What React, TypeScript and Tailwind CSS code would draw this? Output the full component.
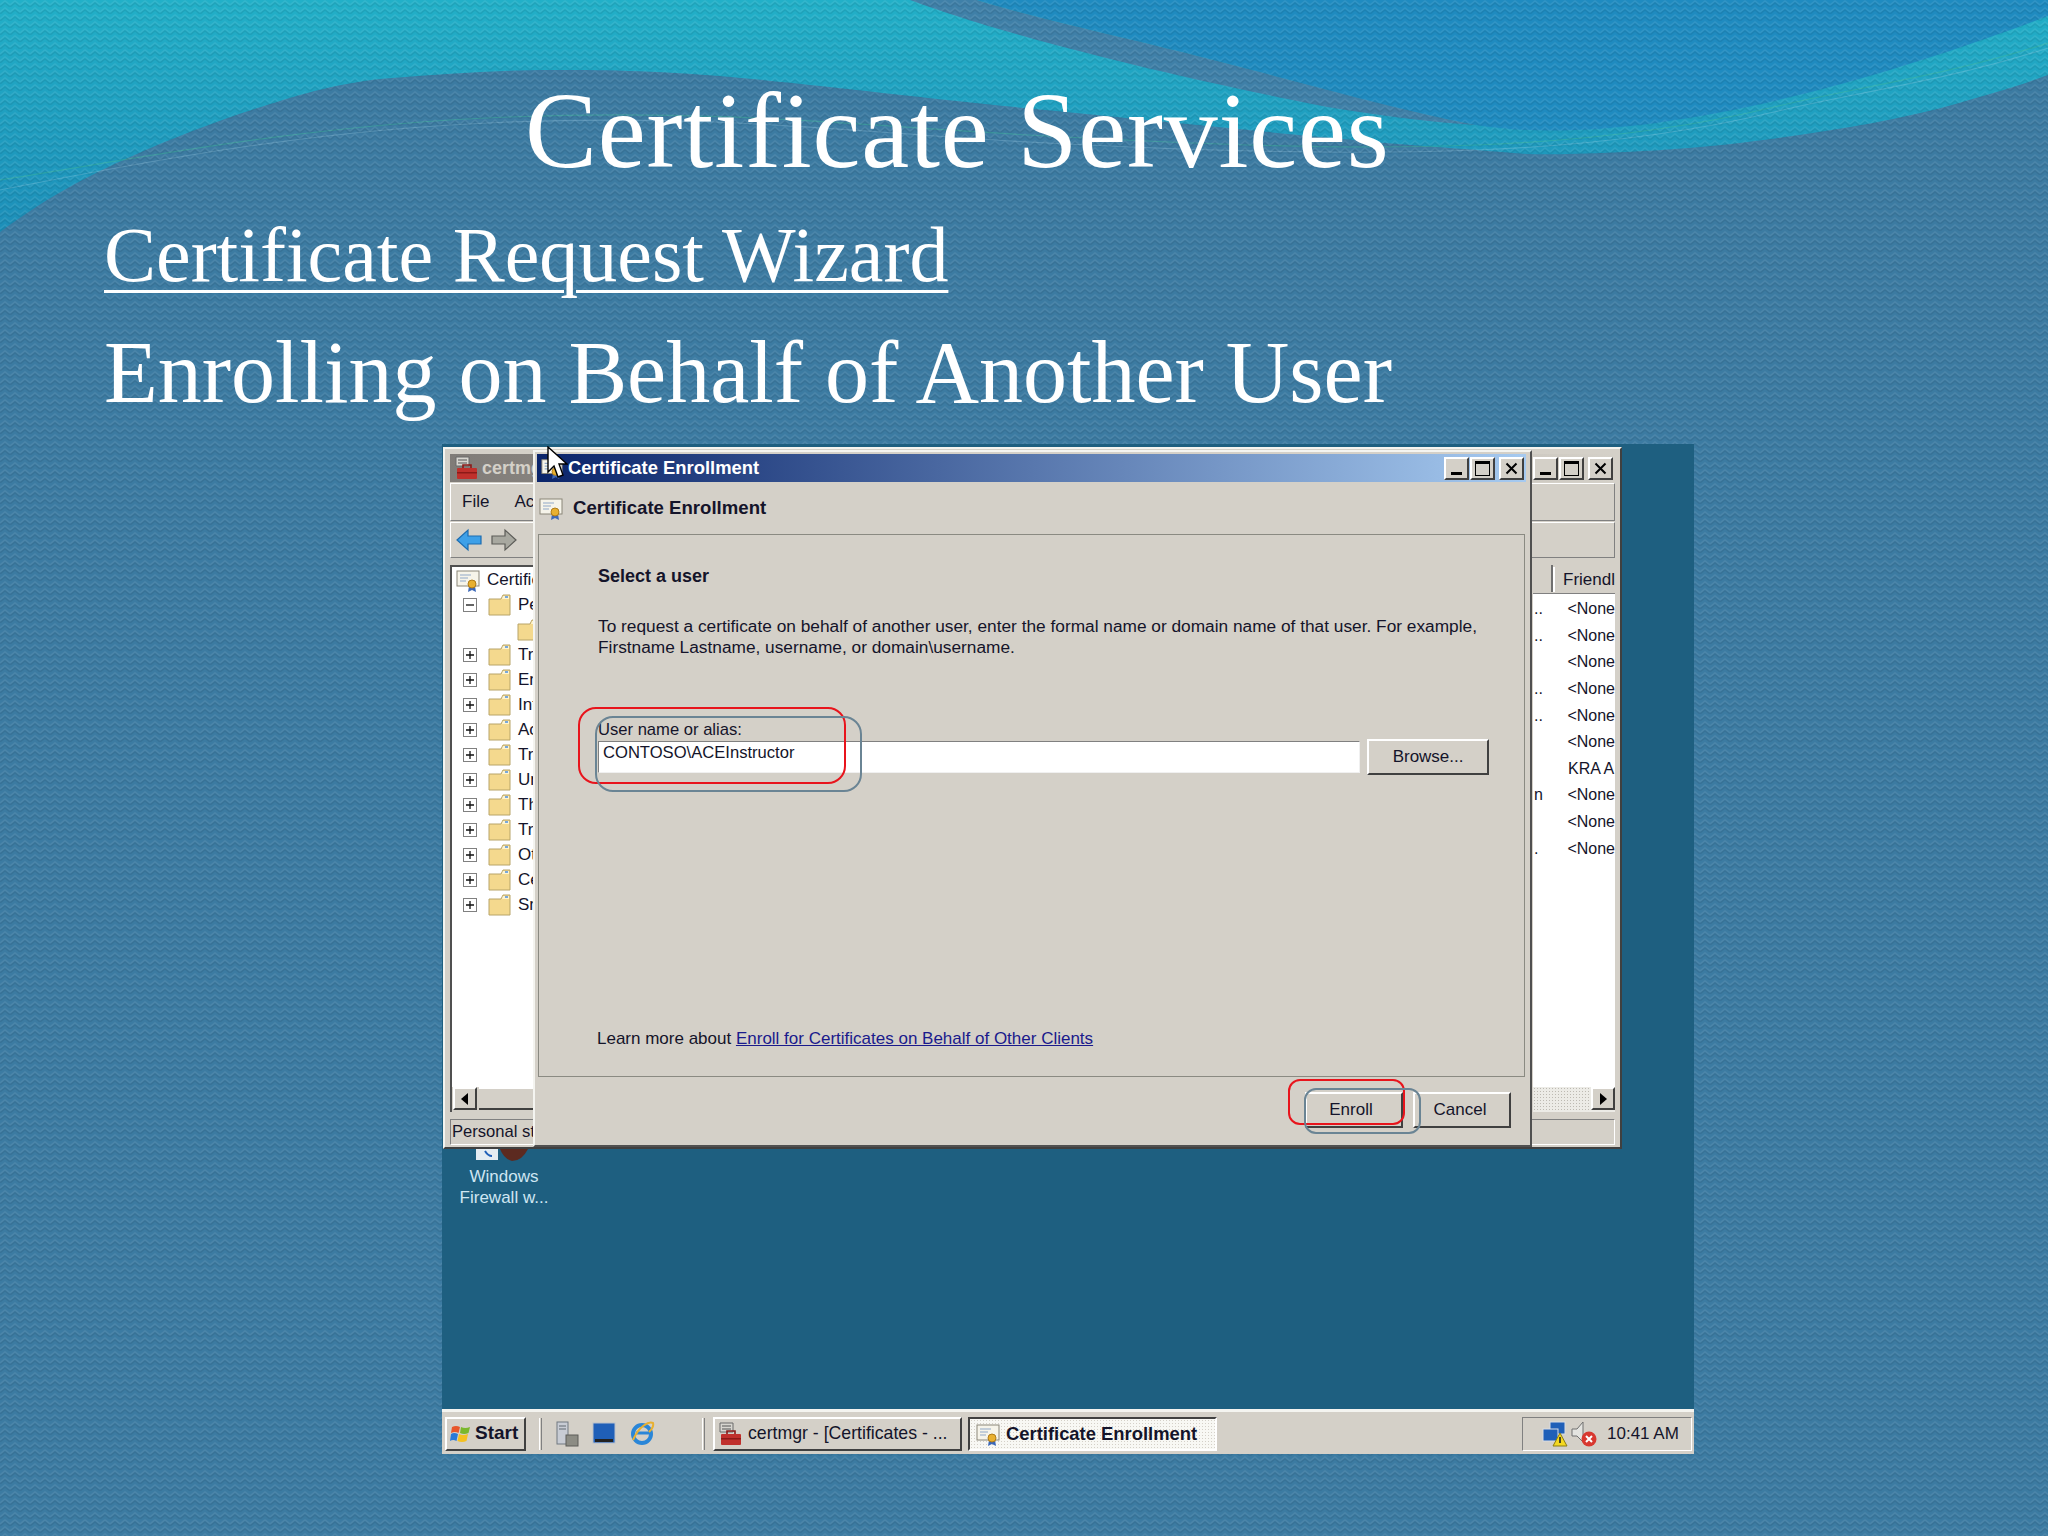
import React from "react";

const raised = "border-2 border-t-white border-l-white border-r-[#404040] border-b-[#404040] bg-[#d4d0c8]";
const ui = "font-['Liberation_Sans',Arial,sans-serif] text-[#14142a]";

const SlideBackground = () => (
  <svg className="absolute inset-0" width="2048" height="1536" viewBox="0 0 2048 1536">
    <defs>
      <linearGradient id="teal" x1="0" y1="0" x2="0" y2="1">
        <stop offset="0" stopColor="#22b0c8" />
        <stop offset="1" stopColor="#1c8db8" />
      </linearGradient>
      <pattern id="zig" width="10" height="7" patternUnits="userSpaceOnUse">
        <path d="M0 5L5 1L10 5" fill="none" stroke="#ffffff" strokeOpacity="0.08" strokeWidth="1.4" />
        <path d="M0 7L5 3L10 7" fill="none" stroke="#000000" strokeOpacity="0.07" strokeWidth="1.4" />
      </pattern>
    </defs>
    <rect width="2048" height="240" fill="url(#teal)" />
    <path d="M977 0C1040 20 1140 40 1252 70S1400 110 1476 125C1600 145 1800 110 2048 16L2048 0Z" fill="#1f8bc0" />
    <path d="M910 0C990 30 1140 70 1327 107Q1420 122 1476 125C1400 110 1330 90 1252 70C1140 40 1040 20 977 0Z" fill="#3f80a8" />
    <path d="M0 232C50 195 90 175 130 157S220 120 261 107S340 82 392 78S500 70 549 70S650 70 731 77S940 100 1045 110S1340 140 1437 147S1520 155 1567 154S1690 150 1763 140S1900 120 1959 103S2020 85 2048 75L2048 1536L0 1536Z" fill="#3c7ba2" />
    <path d="M0 180C130 160 300 125 509 117S850 125 1029 135S1350 150 1476 145S1700 125 1774 107S1950 75 2048 43" fill="none" stroke="#3fb89a" strokeOpacity="0.45" strokeWidth="1.2" />
    <path d="M0 190C130 165 300 130 509 122S850 132 1029 142S1350 155 1476 150S1700 130 1774 112S1950 80 2048 48" fill="none" stroke="#a6d4ea" strokeOpacity="0.28" strokeWidth="1.2" />
    <rect width="2048" height="1536" fill="url(#zig)" />
  </svg>
);

const Folder = () => (
  <svg width="23" height="22" viewBox="0 0 23 22" className="shrink-0">
    <path d="M1 5L1 21L22 21L22 1L15 1L13 5Z" fill="#f4d98e" stroke="#b8a468" />
    <path d="M15 2L21 2L21 5L14 5Z" fill="#fdf4d0" />
    <rect x="17" y="2" width="3" height="2" fill="#7aa8d8" />
  </svg>
);

const Expander = ({ minus }: { minus?: boolean }) => (
  <svg width="14" height="14" viewBox="0 0 14 14" className="shrink-0">
    <rect x="0.5" y="0.5" width="13" height="13" fill="#fff" stroke="#808080" />
    <path d={minus ? "M3 7H11" : "M3 7H11M7 3V11"} stroke="#111" strokeWidth="1.3" />
  </svg>
);

const CertIcon = ({ size = 24 }: { size?: number }) => (
  <svg width={size} height={size} viewBox="0 0 24 24" className="shrink-0">
    <rect x="1" y="3" width="22" height="15" fill="#f6f4ea" stroke="#8a8678" />
    <path d="M4 7H15M4 10H12M4 13H10" stroke="#8fa8c8" strokeWidth="1.2" />
    <path d="M13 18L12 24L16 22L20 24L19 18Z" fill="#3c68b8" />
    <circle cx="16" cy="16" r="4" fill="#e8b030" stroke="#b07c18" />
  </svg>
);

const Toolbox = ({ size = 24 }: { size?: number }) => (
  <svg width={size} height={size} viewBox="0 0 24 24" className="shrink-0">
    <path d="M2 1H15V10H2Z" fill="#d8d6d0" stroke="#6a6a6a" />
    <path d="M4 4H13M4 7H13" stroke="#555" />
    <rect x="3" y="12" width="20" height="11" rx="1" fill="#c0302c" />
    <path d="M9 12V9H17V12" fill="none" stroke="#8c1a18" strokeWidth="1.6" />
    <rect x="3" y="16" width="20" height="1.5" fill="#8c1a18" />
  </svg>
);

const WinButtons = () => (
  <div className="flex items-center">
    <button className={`${raised} flex h-[23px] w-[25px] items-end justify-center pb-[3px]`}>
      <span className="h-[3px] w-[11px] bg-black" />
    </button>
    <button className={`${raised} ml-[1px] flex h-[23px] w-[25px] items-center justify-center`}>
      <span className="h-[15px] w-[15px] border border-t-[3px] border-black" />
    </button>
    <button className={`${raised} ml-[4px] flex h-[23px] w-[25px] items-center justify-center`}>
      <svg width="13" height="13" viewBox="0 0 13 13">
        <path d="M1.5 1.5L11.5 11.5M11.5 1.5L1.5 11.5" stroke="#000" strokeWidth="2" />
      </svg>
    </button>
  </div>
);

const TreeRow = ({ label, minus, child }: { label: string; minus?: boolean; child?: boolean }) => (
  <div className={`flex h-[25px] items-center ${child ? "pl-[65px]" : "pl-[11px]"}`}>
    {!child && <Expander minus={minus} />}
    {!child && <span className="w-[11px]" />}
    <Folder />
    <span className="ml-[7px] text-[17px]">{label}</span>
  </div>
);

const ResultRow = ({ lead, name }: { lead: string; name: string }) => (
  <div className="flex h-[26.6px] items-center text-[16px]">
    <span className="w-[35px] pl-[1px]">{lead}</span>
    <span className="whitespace-nowrap">{name}</span>
  </div>
);

const ArrowButton = ({ dir }: { dir: "left" | "right" }) => (
  <button className={`${raised} flex h-[23px] w-[24px] shrink-0 items-center justify-center`}>
    <svg width="8" height="12" viewBox="0 0 8 12">
      <path d={dir === "left" ? "M7 0V12L0 6Z" : "M1 0V12L8 6Z"} fill="#000" />
    </svg>
  </button>
);

const CertmgrWindow = () => (
  <div className={`${ui} absolute left-[1px] top-[3px] flex h-[702px] w-[1179px] flex-col border-2 border-t-[#f4f4f0] border-l-[#f4f4f0] border-r-[#404040] border-b-[#404040] bg-[#d4d0c8] px-[5px] pt-[5px]`}>
    <div className="flex h-[28px] items-center justify-between bg-[linear-gradient(to_right,#807c78,#d4d0c8)] pl-[4px] pr-[2px]">
      <div className="flex items-center gap-[4px]">
        <Toolbox />
        <span className="text-[18px] font-bold text-[#d4d0c8]">certmgr</span>
      </div>
      <WinButtons />
    </div>
    <div className="mt-[1px] flex h-[38px] items-center gap-[25px] border border-b-[#808080] border-l-white border-r-[#808080] border-t-white pl-[11px] text-[17px]">
      <span>File</span>
      <span>Ac</span>
    </div>
    <div className="mt-[1px] flex h-[36px] items-center gap-[9px] border border-b-[#808080] border-l-white border-r-[#808080] border-t-white pl-[5px]">
      <svg width="26" height="24" viewBox="0 0 26 24">
        <path d="M1 12L12 2V8H25V16H12V22Z" fill="#3ea0e8" stroke="#1c6cb0" strokeWidth="1.2" />
      </svg>
      <svg width="26" height="24" viewBox="0 0 26 24">
        <path d="M25 12L14 2V8H1V16H14V22Z" fill="#a8a8a0" stroke="#5c5c58" strokeWidth="1.2" />
      </svg>
    </div>
    <div className="mt-[7px] flex h-[547px] justify-between">
      <div className="flex w-[300px] flex-col justify-between border-l-2 border-t-2 border-[#505050] bg-white">
        <div>
          <div className="flex h-[25px] items-center pl-[4px]">
            <CertIcon />
            <span className="ml-[7px] text-[17px]">Certificates</span>
          </div>
          <TreeRow label="Personal" minus />
          <TreeRow label="" child />
          {["Trusted", "Enterprise", "Intermediate", "Active", "Trusted", "Untrusted", "Third", "Trusted", "Other", "Certificate", "Smart"].map((label, i) => (
            <TreeRow key={i} label={label} />
          ))}
        </div>
        <div className="flex h-[25px] bg-[#d4d0c8] pl-[1px]">
          <ArrowButton dir="left" />
          <div className="ml-[2px] h-[23px] flex-1 border-b-2 border-t-2 border-b-[#404040] border-t-white" />
        </div>
      </div>
      <div className="flex w-[82px] flex-col justify-between bg-white">
        <div>
          <div className="flex h-[29px] items-end border-b border-[#808080] bg-[#d4d0c8] pb-[1px]">
            <span className="h-full w-[23px] border-r-2 border-[#707070]" />
            <span className="whitespace-nowrap border-l-2 border-white pl-[8px] text-[17px]">Friendl</span>
          </div>
          <div className="pt-[2px]">
            <ResultRow lead=".." name="<None" />
            <ResultRow lead=".." name="<None" />
            <ResultRow lead="" name="<None" />
            <ResultRow lead=".." name="<None" />
            <ResultRow lead=".." name="<None" />
            <ResultRow lead="" name="<None" />
            <ResultRow lead="" name="KRA A" />
            <ResultRow lead="n" name="<None" />
            <ResultRow lead="" name="<None" />
            <ResultRow lead="." name="<None" />
          </div>
        </div>
        <div className="flex h-[25px] justify-end bg-[radial-gradient(#bdbab2_1px,#ecebe6_1px)] bg-[length:3px_3px]">
          <ArrowButton dir="right" />
        </div>
      </div>
    </div>
    <div className="mt-[7px] flex h-[26px] items-center whitespace-nowrap border border-b-white border-l-[#808080] border-r-white border-t-[#808080] pl-[1px] text-[16.6px]">
      Personal store
    </div>
  </div>
);

const DialogButton = ({ label, className }: { label: string; className?: string }) => (
  <button className={`${raised} flex h-[36px] items-center justify-center text-[17px] ${className ?? ""}`}>{label}</button>
);

const EnrollmentDialog = () => (
  <div className={`${ui} absolute left-[91px] top-[6px] flex h-[697px] w-[999px] flex-col border-[2px] border-l-[#f4f4f0] border-t-[#f4f4f0] border-r-[#505050] border-b-[#505050] bg-[#d4d0c8] pl-[2px] pr-[4px] pt-[2px]`}>
    <div className="flex h-[28px] shrink-0 items-center justify-between bg-[linear-gradient(to_right,#0a246a,#a6caf0)] pl-[4px] pr-[2px]">
      <div className="flex items-center gap-[5px]">
        <CertIcon size={22} />
        <span className="text-[18.4px] font-bold text-white">Certificate Enrollment</span>
      </div>
      <WinButtons />
    </div>
    <div className="flex h-[52px] shrink-0 items-center pl-[2px]">
      <CertIcon />
      <span className="ml-[10px] text-[18.6px] font-bold">Certificate Enrollment</span>
    </div>
    <div className="mx-[1px] flex h-[543px] shrink-0 flex-col border border-[#8a8a82] pl-[59px] pr-[35px] pt-[29px]">
      <div className="text-[18px] font-bold leading-[24px]">Select a user</div>
      <p className="mt-[28px] w-[930px] text-[17.3px] leading-[21px]">
        To request a certificate on behalf of another user, enter the formal name or domain name of that user. For example,
        <br />
        Firstname Lastname, username, or domain\username.
      </p>
      <label className="mt-[61px] block text-[16.6px] leading-[22px]">User name or alias:</label>
      <div className="flex items-start">
        <div className="h-[32px] w-[763px] border border-b-[#f0f0f0] border-l-[#808080] border-r-[#f0f0f0] border-t-[#808080] bg-white pl-[4px] text-[16.6px] leading-[22px]">
          CONTOSO\ACEInstructor
        </div>
        <DialogButton label="Browse..." className="ml-[7px] -mt-[2px] w-[122px]" />
      </div>
      <div className="mt-[253px] -ml-[1px] text-[17px] leading-[22px]">
        Learn more about{" "}
        <a className="text-[#1a1a8c] underline">Enroll for Certificates on Behalf of Other Clients</a>
      </div>
    </div>
    <div className="flex flex-1 items-start justify-end gap-[10px] pr-[15px] pt-[15px]">
      <DialogButton label="Enroll" className="w-[98px] pr-[6px]" />
      <DialogButton label="Cancel" className="w-[98px] pr-[4px]" />
    </div>
  </div>
);

const Taskbar = () => (
  <div className={`${ui} flex h-[45px] shrink-0 items-center border-t-[3px] border-[#f4f4f0] bg-[#d4d0c8] pl-[3px] pr-[2px] pt-[1px]`}>
    <button className={`${raised} flex h-[34px] w-[81px] items-center gap-[2px] pl-[2px] text-[19px] font-bold`}>
      <svg width="24" height="24" viewBox="0 0 24 24" className="shrink-0">
        <path d="M3 5Q7 3 11 5L9.5 11Q6 9 2 11Z" fill="#e8562a" />
        <path d="M12 5Q16 7 21 5L19.5 11Q15 13 11 11Z" fill="#7ab82c" />
        <path d="M2 12Q5 10 9 12L7.5 19Q4 17 1 19Z" fill="#2a7ad8" />
        <path d="M10 12Q14 14 19 12L17.5 19Q13 21 8.5 19Z" fill="#f4c020" />
      </svg>
      Start
    </button>
    <span className="ml-[13px] h-[32px] w-[3px] border-l border-r border-l-white border-r-[#808080]" />
    <div className="ml-[13px] flex w-[147px] items-center gap-[13px]">
      <svg width="24" height="28" viewBox="0 0 24 28">
        <rect x="2" y="2" width="11" height="22" fill="#c8ccd4" stroke="#707880" />
        <path d="M4 6H11M4 9H11" stroke="#606870" />
        <rect x="11" y="15" width="12" height="11" fill="#8c8c84" stroke="#5c5c58" />
      </svg>
      <svg width="24" height="26" viewBox="0 0 24 26">
        <rect x="1" y="2" width="22" height="20" fill="#1f5fb8" stroke="#b8c0cc" />
        <rect x="3" y="18" width="18" height="3" fill="#222" />
      </svg>
      <svg width="26" height="28" viewBox="0 0 26 28">
        <circle cx="13" cy="14" r="9" fill="none" stroke="#2a86d8" strokeWidth="4" />
        <path d="M7 13H20" stroke="#2a86d8" strokeWidth="3" />
        <path d="M4 20C10 6 20 1 24 3C25 6 22 10 20 12" fill="none" stroke="#e8b030" strokeWidth="2" />
      </svg>
    </div>
    <span className="h-[32px] w-[3px] border-l border-r border-l-white border-r-[#808080]" />
    <button className={`${raised} ml-[8px] flex h-[34px] w-[249px] items-center gap-[6px] overflow-hidden whitespace-nowrap pl-[3px] text-[17.7px]`}>
      <Toolbox />
      certmgr - [Certificates - ...
    </button>
    <button className="ml-[6px] flex h-[34px] w-[249px] items-center gap-[6px] overflow-hidden whitespace-nowrap border-2 border-b-white border-l-[#404040] border-r-white border-t-[#404040] bg-[radial-gradient(#d4d0c8_1px,#f8f8f4_1px)] bg-[length:3px_3px] pl-[6px] text-[18.4px] font-bold">
      <CertIcon />
      Certificate Enrollment
    </button>
    <div className="ml-auto flex h-[34px] w-[170px] items-center border border-b-white border-l-[#808080] border-r-white border-t-[#808080] pl-[19px]">
      <svg width="26" height="26" viewBox="0 0 26 26">
        <rect x="8" y="1" width="15" height="12" fill="#1f5fb8" stroke="#d8dce4" />
        <rect x="1" y="8" width="15" height="12" fill="#1f5fb8" stroke="#d8dce4" />
        <path d="M18 12L25 25H11Z" fill="#f4d820" stroke="#8c7c10" />
        <rect x="17.2" y="16" width="1.6" height="6" fill="#222" />
      </svg>
      <svg width="26" height="26" viewBox="0 0 26 26" className="ml-[3px]">
        <path d="M1 8H6L12 1V21L6 15H1Z" fill="#e4e4e0" stroke="#707070" />
        <circle cx="18" cy="18" r="7.5" fill="#d83830" />
        <path d="M15 15L21 21M21 15L15 21" stroke="#fff" strokeWidth="2" />
      </svg>
      <span className="ml-[10px] text-[17px]">10:41 AM</span>
    </div>
  </div>
);

const Desktop = () => (
  <div className="relative ml-[442px] mt-[19px] flex h-[1010px] w-[1252px] flex-col justify-end bg-[#1e5f80]">
    <div className="absolute left-[12px] top-[722px] w-[100px] whitespace-nowrap text-center font-['Liberation_Sans',Arial,sans-serif] text-[17px] leading-[21px] text-[#cfe6f2]">
      Windows
      <br />
      Firewall w...
    </div>
    <svg className="absolute left-[34px] top-[705px]" width="64" height="14" viewBox="0 0 64 14">
      <rect x="0" y="0" width="22" height="11" fill="#e4ecf2" />
      <path d="M9 2Q12 7 16 7" stroke="#1f5fb8" strokeWidth="2" fill="none" />
      <path d="M24 0H52Q46 12 36 12Q28 10 24 0Z" fill="#5c2a20" />
    </svg>
    <CertmgrWindow />
    <EnrollmentDialog />
    {/* annotations drawn on top of the screenshot */}
    <div className="absolute left-[136px] top-[263px] h-[77px] w-[268px] rounded-[18px] border-2 border-[#e8141c]" />
    <div className="absolute left-[153px] top-[272px] h-[76px] w-[267px] rounded-[18px] border-2 border-[#6a8494]" />
    <div className="absolute left-[846px] top-[635px] h-[46px] w-[117px] rounded-[12px] border-2 border-[#e8141c]" />
    <div className="absolute left-[862px] top-[644px] h-[46px] w-[117px] rounded-[12px] border-2 border-[#6a8494]" />
    <svg className="absolute left-[104px] top-[2px]" width="22" height="34" viewBox="0 0 22 34">
      <path d="M2 1V26L8 20L12 31L17 29L13 18L21 18Z" fill="#fff" stroke="#000" strokeWidth="1.4" />
    </svg>
    <Taskbar />
  </div>
);

export default function App() {
  return (
    <div className="relative h-[1536px] w-[2048px] overflow-hidden bg-[#3c7ba2] font-['Liberation_Serif','Times_New_Roman',serif] text-white">
      <SlideBackground />
      <div className="relative">
        <h1 className="ml-[525px] pt-[68px] text-[108px] leading-[125px] tracking-[0.8px]">Certificate Services</h1>
        <div className="ml-[104px] mt-[16px] text-[78px] leading-[92px] underline decoration-[3px] underline-offset-[9px]">
          Certificate Request Wizard
        </div>
        <div className="ml-[104px] mt-[20px] text-[88px] leading-[104px]">Enrolling on Behalf of Another User</div>
        <Desktop />
      </div>
    </div>
  );
}
